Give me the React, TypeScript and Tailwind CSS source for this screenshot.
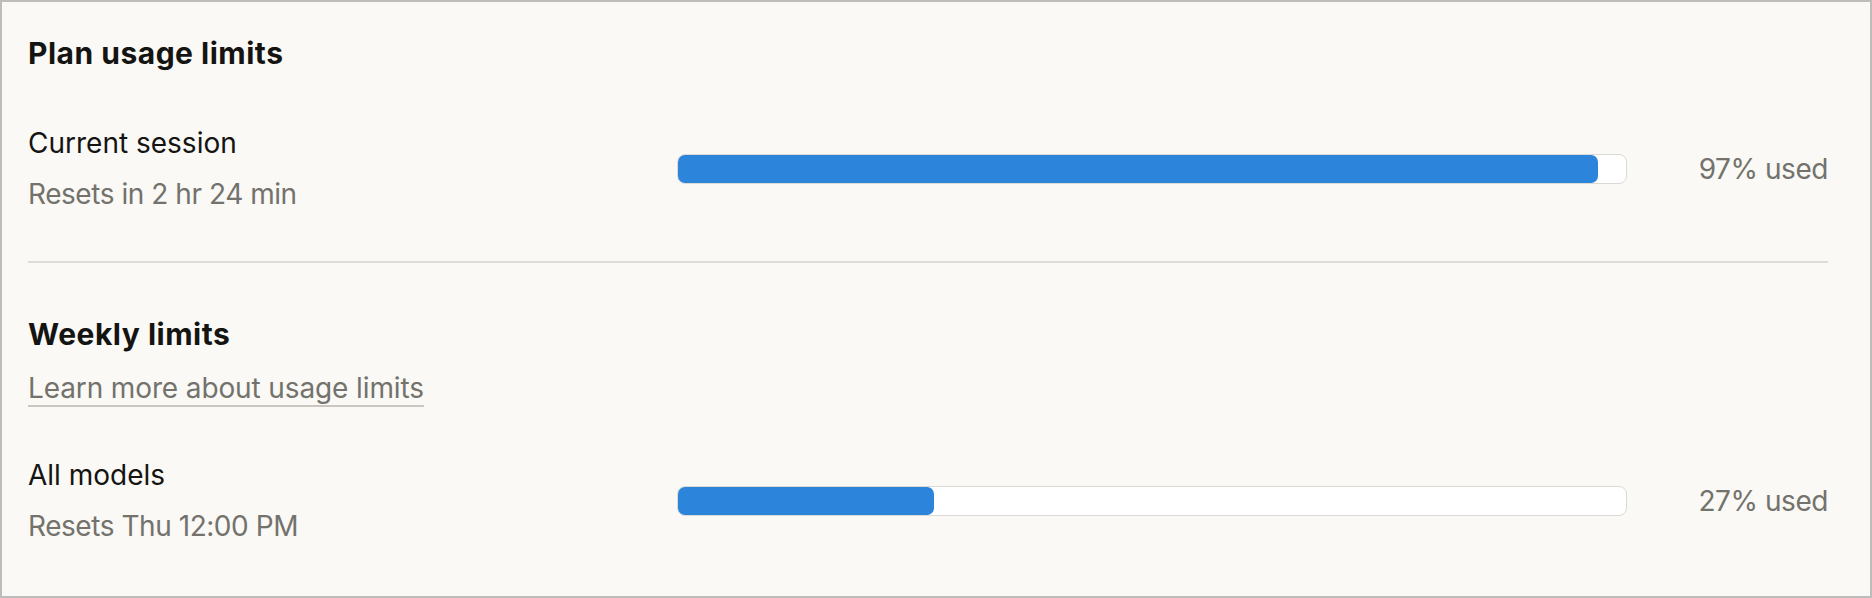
import React from "react";

function Bar({ pct }: { pct: number }) {
  return (
    <div className="h-[30px] w-[950px] shrink-0 rounded-[8px] border border-[#dcdad4] bg-white p-0">
      <div
        className="h-full rounded-[7px] bg-[#2c84db]"
        style={{ width: `${pct}%` }}
      />
    </div>
  );
}

function Row({
  label,
  sub,
  pct,
}: {
  label: string;
  sub: string;
  pct: number;
}) {
  return (
    <div className="flex items-center">
      <div className="flex w-[649px] shrink-0 flex-col gap-[11px]">
        <div className="text-[28px] leading-[40px] text-[#141413]">{label}</div>
        <div className="text-[28px] leading-[40px] tracking-[-0.45px] text-[#73726c]">
          {sub}
        </div>
      </div>
      <Bar pct={pct} />
      <div className="flex-1 text-right text-[28px] leading-[40px] tracking-[-0.45px] text-[#73726c]">
        {pct}% used
      </div>
    </div>
  );
}

export default function App() {
  return (
    <div
      className="box-border h-[598px] w-[1872px] border-2 border-[#bdbdbb] bg-[#faf9f5] pl-[26px] pr-[42px] pt-[33px]"
      style={{ fontFamily: "Inter, 'Noto Sans', sans-serif" }}
    >
      <h2 className="text-[30px] font-bold leading-[36px] tracking-[0.5px] text-[#141413]">
        Plan usage limits
      </h2>
      <div className="mt-[52px]">
        <Row label="Current session" sub="Resets in 2 hr 24 min" pct={97} />
      </div>
      <div className="mt-[47px] h-[2px] bg-[#dedcd6]" />
      <h2 className="mt-[53px] text-[30px] font-bold leading-[36px] tracking-[0.5px] text-[#141413]">
        Weekly limits
      </h2>
      <div className="mt-[16px] text-[28px] leading-[40px]">
        <a
          href="#"
          className="tracking-[-0.12px] text-[#73726c] underline decoration-[#c9c7c0] decoration-2 underline-offset-[7px]"
        >
          Learn more about usage limits
        </a>
      </div>
      <div className="mt-[47px]">
        <Row label="All models" sub="Resets Thu 12:00 PM" pct={27} />
      </div>
    </div>
  );
}
